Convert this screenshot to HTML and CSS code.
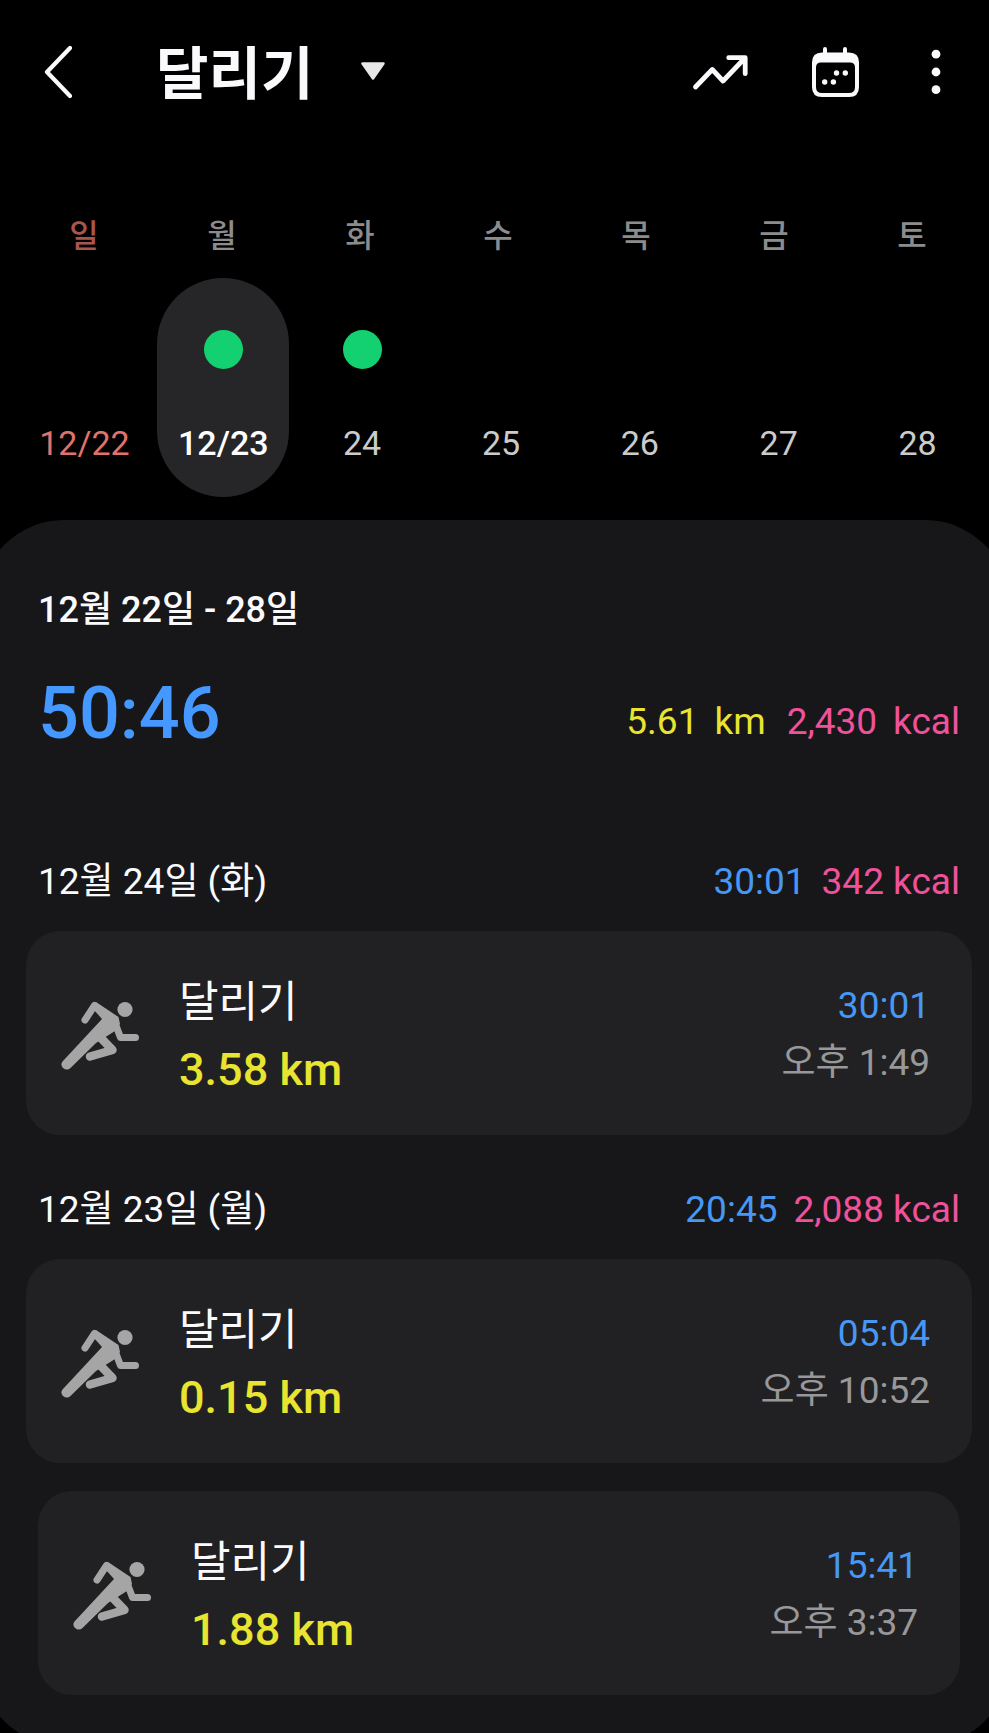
FILE: index.html
```html
<!DOCTYPE html>
<html lang="ko">
<head>
    <meta charset="utf-8">
    <meta name="viewport" content="width=device-width, initial-scale=1">
    <title>달리기</title>
    <link rel="stylesheet" href="styles.css">
</head>
<body>
<svg class="symbols" aria-hidden="true">
    <symbol id="runner" viewBox="0 0 78 70">
        <circle cx="64" cy="8.500" r="7.600" fill="currentColor"/>
        <path d="M33 9 L41 18 L1.500 60.500 Q-1 64 2 67 Q6 70 9.500 67 L35 42 L54 30 L59 23 L57.500 16 L35 1 Z" fill="currentColor"/>
        <g fill="none" stroke="currentColor" stroke-linecap="round" stroke-linejoin="round">
            <path d="M24 19 L33.500 4.500 L54 19" stroke-width="7"/>
            <path d="M54 22 L59.500 36.500 H74.500" stroke-width="7"/>
            <path d="M39 36 L51.500 49 L29 55.500" stroke-width="8.500"/>
        </g>
    </symbol>
</svg>
<div class="screen">
    <header class="topbar">
        <button class="icon-btn" type="button" aria-label="뒤로">
            <svg width="28" height="56" viewBox="0 0 28 56">
                <path d="M26 4 L3 28 L26 52" fill="none" stroke="currentColor" stroke-width="4.200" stroke-linecap="round" stroke-linejoin="round"/>
            </svg>
        </button>
        <label class="picker">
            <select class="picker-select" aria-label="운동 종류">
                <option>달리기</option>
            </select>
            <svg class="picker-arrow" width="24" height="20" viewBox="0 0 24 20">
                <path d="M1.500 1.500 H22.500 L12 16.500 Z" fill="currentColor" stroke="currentColor" stroke-width="2.500" stroke-linejoin="round"/>
            </svg>
        </label>
        <div class="actions">
            <button class="icon-btn" type="button" aria-label="추세">
                <svg width="60" height="56" viewBox="0 0 60 56">
                    <path d="M5.500 43 L22.300 25.500 L33 37 L55 14 M38.700 13.700 H55.200 V29.700" fill="none" stroke="currentColor" stroke-width="4.800" stroke-linecap="round" stroke-linejoin="round"/>
                </svg>
            </button>
            <button class="icon-btn" type="button" aria-label="달력">
                <svg width="52" height="56" viewBox="2 0 52 56">
                    <path d="M15 5 V12 M35 5 V12" stroke="currentColor" stroke-width="4" stroke-linecap="round"/>
                    <path fill-rule="evenodd" d="M12 8.500 H39 Q49 8.500 49 18.500 V43 Q49 53 39 53 H12 Q2 53 2 43 V18.500 Q2 8.500 12 8.500 Z M11 18.500 Q6 18.500 6 23.500 V43 Q6 49 12 49 H39 Q45 49 45 43 V23.500 Q45 18.500 40 18.500 Z" fill="currentColor"/>
                    <g fill="currentColor">
                        <circle cx="26.500" cy="29" r="2.700"/>
                        <circle cx="35.300" cy="29" r="2.700"/>
                        <circle cx="14.700" cy="38" r="2.700"/>
                        <circle cx="23.400" cy="38" r="2.700"/>
                    </g>
                </svg>
            </button>
            <button class="icon-btn" type="button" aria-label="더보기">
                <svg width="20" height="56" viewBox="0 0 20 56" fill="currentColor">
                    <circle cx="10" cy="10.200" r="4.400"/>
                    <circle cx="10" cy="28" r="4.400"/>
                    <circle cx="10" cy="45.700" r="4.400"/>
                </svg>
            </button>
        </div>
    </header>

    <div class="weekdays">
        <span class="sunday">일</span>
        <span>월</span>
        <span>화</span>
        <span>수</span>
        <span>목</span>
        <span>금</span>
        <span>토</span>
    </div>
    <div class="dates">
        <button class="date holiday" type="button"><span class="dot-space"></span>12/22</button>
        <button class="date selected" type="button"><span class="dot-space dot"></span>12/23</button>
        <button class="date" type="button"><span class="dot-space dot"></span>24</button>
        <button class="date" type="button"><span class="dot-space"></span>25</button>
        <button class="date" type="button"><span class="dot-space"></span>26</button>
        <button class="date" type="button"><span class="dot-space"></span>27</button>
        <button class="date" type="button"><span class="dot-space"></span>28</button>
    </div>

    <main class="sheet">
        <section class="summary">
            <h1 class="summary-title">12월 22일 - 28일</h1>
            <div class="summary-row">
                <span class="total">50:46</span>
                <div class="summary-stats">
                    <p class="stat km"><span>5.61</span><span>km</span></p>
                    <p class="stat kcal"><span>2,430</span><span>kcal</span></p>
                </div>
            </div>
        </section>

        <section class="day">
            <div class="day-head">
                <h2 class="day-title">12월 24일 (화)</h2>
                <span class="time">30:01</span>
                <span class="kcal">342 kcal</span>
            </div>
            <article class="card">
                <svg class="runner" width="78" height="70"><use href="#runner"/></svg>
                <div class="card-main">
                    <h3 class="card-name">달리기</h3>
                    <p class="card-distance">3.58 km</p>
                </div>
                <div class="card-side">
                    <span class="time">30:01</span>
                    <span class="clock">오후 1:49</span>
                </div>
            </article>
        </section>

        <section class="day">
            <div class="day-head">
                <h2 class="day-title">12월 23일 (월)</h2>
                <span class="time">20:45</span>
                <span class="kcal">2,088 kcal</span>
            </div>
            <article class="card">
                <svg class="runner" width="78" height="70"><use href="#runner"/></svg>
                <div class="card-main">
                    <h3 class="card-name">달리기</h3>
                    <p class="card-distance">0.15 km</p>
                </div>
                <div class="card-side">
                    <span class="time">05:04</span>
                    <span class="clock">오후 10:52</span>
                </div>
            </article>
            <article class="card inset">
                <svg class="runner" width="78" height="70"><use href="#runner"/></svg>
                <div class="card-main">
                    <h3 class="card-name">달리기</h3>
                    <p class="card-distance">1.88 km</p>
                </div>
                <div class="card-side">
                    <span class="time">15:41</span>
                    <span class="clock">오후 3:37</span>
                </div>
            </article>
        </section>
    </main>
</div>
</body>
</html>
```
FILE: styles.css
```css
* {
    box-sizing: border-box;
}

body {
    margin: 0;
    background-color: #000;
    color: #fafafc;
    font-family: Roboto, "Noto Sans CJK KR", sans-serif;
    font-size: 37px;
    line-height: 44px;
}

h1, h2, h3, p {
    margin: 0;
    font-size: inherit;
    font-weight: 400;
}

button, select {
    border: none;
    padding: 0;
    background: none;
    color: inherit;
    font: inherit;
    cursor: pointer;
}

.symbols {
    display: none;
}

.screen {
    height: 100vh;
    overflow: hidden auto;
    scrollbar-width: none;
}

/* top bar */
.topbar {
    display: flex;
    align-items: center;
    height: 144px;
    padding: 0 43px 0 44px;
}

.icon-btn svg {
    display: block;
}

.picker {
    display: grid;
    align-items: center;
    margin-left: 84px;
}

.picker-select {
    grid-area: 1 / 1;
    appearance: none;
    height: 84px;
    padding: 6px 71px 0 0;
    font-size: 57px;
    font-weight: 700;
    line-height: 78px;
}

.picker-arrow {
    grid-area: 1 / 1;
    justify-self: end;
    color: #e8e8e8;
    pointer-events: none;
}

.actions {
    display: flex;
    gap: 62px;
    margin-left: auto;
}

/* week strip */
.weekdays {
    display: grid;
    grid-template-columns: repeat(7, 1fr);
    padding: 70px 8px 20px 15px;
    color: #8c8c8c;
    font-size: 32px;
    font-weight: 500;
    text-align: center;
}

.sunday {
    color: #a9554f;
}

.dates {
    display: grid;
    grid-template-columns: repeat(7, 1fr);
    justify-items: center;
    padding: 0 2px 23px 15px;
}

.date {
    display: flex;
    flex-direction: column;
    align-items: center;
    width: 132px;
    padding: 52px 0 32px;
    border-radius: 66px;
    color: #cbcbcb;
    font-size: 34px;
}

.dot-space {
    width: 39px;
    height: 39px;
    margin-bottom: 52px;
    border-radius: 50%;
}

.dot {
    background-color: #13d170;
}

.holiday {
    color: #e0736b;
}

.selected {
    background-color: #262628;
    color: #fff;
    font-weight: 500;
}

/* weekly sheet, its sides run past the screen edges */
.sheet {
    margin: 0 -20px;
    padding: 68px 37px 51px 46px;
    border-radius: 84px;
    background-color: #17171a;
}

.summary {
    padding: 0 12px;
    margin-bottom: 104px;
}

.summary-title {
    font-size: 36px;
    font-weight: 500;
}

.summary-row {
    display: flex;
    align-items: flex-end;
    justify-content: space-between;
    margin-top: 40px;
}

.total {
    color: #4498ff;
    font-size: 72px;
    font-weight: 500;
    line-height: 84px;
}

.summary-stats {
    display: flex;
    gap: 21px;
    padding-bottom: 12px;
}

.stat {
    display: flex;
    gap: 16px;
}

.km {
    color: #e8e430;
}

.kcal {
    color: #f0529a;
}

.time {
    color: #4797f5;
}

.clock {
    color: #98989a;
}

.day {
    margin-bottom: 53px;
}

.day:last-child {
    margin-bottom: 0;
}

.day-head {
    display: flex;
    gap: 16px;
    padding: 0 12px;
    margin-bottom: 27px;
}

.day-title {
    margin-right: auto;
}

.card {
    display: flex;
    align-items: center;
    padding: 42px 42px 36px 35px;
    border-radius: 34px;
    background-color: #212123;
}

.inset {
    margin: 28px 12px 0;
}

.runner {
    color: #a5a5a5;
}

.card-main {
    display: flex;
    flex-direction: column;
    gap: 10px;
    margin-left: 40px;
    line-height: 58px;
}

.card-name {
    font-size: 43px;
}

.card-distance {
    color: #e8e430;
    font-size: 45px;
    font-weight: 500;
}

.card-side {
    display: flex;
    flex-direction: column;
    gap: 13px;
    padding-bottom: 3px;
    margin-left: auto;
    text-align: right;
}
```
